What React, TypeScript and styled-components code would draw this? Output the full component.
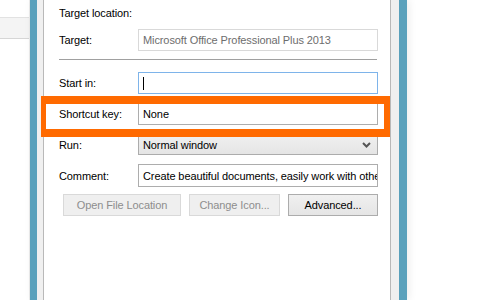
import styled, { createGlobalStyle } from 'styled-components';

const GlobalStyle = createGlobalStyle`
  html, body {
    margin: 0;
    padding: 0;
    background: #ffffff;
  }
  body {
    font-family: 'Liberation Sans', Arial, sans-serif;
    font-size: 11px;
    letter-spacing: -0.1px;
    color: #000;
  }
`;

const Page = styled.div`
  display: flex;
  width: 500px;
  height: 300px;
  overflow: hidden;
  background: #fff;
`;

const SidePane = styled.div`
  width: 29px;
  border-right: 1px solid #ececec;
  padding-top: 17px;
  flex-shrink: 0;
`;

const SideBand = styled.div`
  height: 20px;
  background: #f4f4f4;
  border-top: 1px solid #e2e2e2;
  border-bottom: 1px solid #d6d6d6;
`;

const Window = styled.div`
  display: flex;
  width: 377px;
  flex-shrink: 0;
  border-left: 7px solid #5aa1bc;
  border-right: 8px solid #5aa1bc;
  background: #f0f0f0;
  padding: 0 8px 0 6px;
  box-shadow: 2px 0 8px rgba(0, 0, 0, 0.08);
  box-sizing: border-box;
`;

const Sheet = styled.div`
  position: relative;
  flex: 1;
  background: #fff;
  border-left: 1px solid #b9b9b9;
  border-right: 1px solid #b9b9b9;
  padding: 7px 12px 0 15px;
`;

const Row = styled.div<{ $top?: number }>`
  display: flex;
  align-items: center;
  margin-top: ${(p) => p.$top ?? 0}px;
`;

const Label = styled.div<{ $auto?: boolean }>`
  width: ${(p) => (p.$auto ? 'auto' : '79px')};
  flex-shrink: 0;
  color: #000;
`;

const Field = styled.div<{ $tone?: 'disabled' | 'focus' | 'normal'; $h?: number }>`
  width: 240px;
  height: ${(p) => p.$h ?? 22}px;
  box-sizing: border-box;
  display: flex;
  align-items: center;
  padding-left: 4px;
  background: #fff;
  white-space: nowrap;
  overflow: hidden;
  border: 1px solid
    ${(p) => (p.$tone === 'disabled' ? '#d9d9d9' : p.$tone === 'focus' ? '#7eb4ea' : '#adadad')};
  color: ${(p) => (p.$tone === 'disabled' ? '#6d6d6d' : '#000')};
`;

const Caret = styled.span`
  display: inline-block;
  width: 1px;
  height: 13px;
  background: #000;
`;

const Divider = styled.div`
  height: 1px;
  background: #a0a0a0;
  margin: 8px 0 0 0;
  width: 318px;
`;

const Select = styled.div`
  width: 240px;
  height: 21px;
  box-sizing: border-box;
  display: flex;
  align-items: center;
  justify-content: space-between;
  padding: 0 6px 0 4px;
  border: 1px solid #acacac;
  background: linear-gradient(#f0f0f0, #e5e5e5);
`;

const Buttons = styled.div`
  display: flex;
  gap: 8px;
  margin: 7px 0 0 4px;
`;

const Button = styled.div<{ $w: number; $disabled?: boolean }>`
  width: ${(p) => p.$w}px;
  height: 22px;
  box-sizing: border-box;
  display: flex;
  align-items: center;
  justify-content: center;
  border: 1px solid ${(p) => (p.$disabled ? '#d9d9d9' : '#acacac')};
  background: ${(p) => (p.$disabled ? '#efefef' : 'linear-gradient(#f0f0f0, #e5e5e5)')};
  color: ${(p) => (p.$disabled ? '#8d8d8d' : '#000')};
`;

const Highlight = styled.div`
  position: absolute;
  left: -3px;
  top: 96px;
  width: 349px;
  height: 41px;
  box-sizing: border-box;
  border: solid #ff6a00;
  border-width: 8px 6px 8px 5px;
  pointer-events: none;
`;

const Chevron = () => (
  <svg width="9" height="6" viewBox="0 0 9 6">
    <path d="M1 1 L4.5 4.5 L8 1" fill="none" stroke="#555" strokeWidth="2" />
  </svg>
);

export default function App() {
  return (
    <Page>
      <GlobalStyle />
      <SidePane>
        <SideBand />
      </SidePane>
      <Window>
        <Sheet>
          <Row>
            <Label $auto>Target location:</Label>
          </Row>
          <Row $top={10}>
            <Label>Target:</Label>
            <Field $tone="disabled">Microsoft Office Professional Plus 2013</Field>
          </Row>
          <Divider />
          <Row $top={12}>
            <Label>Start in:</Label>
            <Field $tone="focus">
              <Caret />
            </Field>
          </Row>
          <Row $top={9}>
            <Label>Shortcut key:</Label>
            <Field>None</Field>
          </Row>
          <Row $top={9}>
            <Label>Run:</Label>
            <Select>
              <span>Normal window</span>
              <Chevron />
            </Select>
          </Row>
          <Row $top={9}>
            <Label>Comment:</Label>
            <Field $h={23}>Create beautiful documents, easily work with others</Field>
          </Row>
          <Buttons>
            <Button $w={118} $disabled>
              Open File Location
            </Button>
            <Button $w={91} $disabled>
              Change Icon...
            </Button>
            <Button $w={90}>Advanced...</Button>
          </Buttons>
          <Highlight />
        </Sheet>
      </Window>
    </Page>
  );
}
